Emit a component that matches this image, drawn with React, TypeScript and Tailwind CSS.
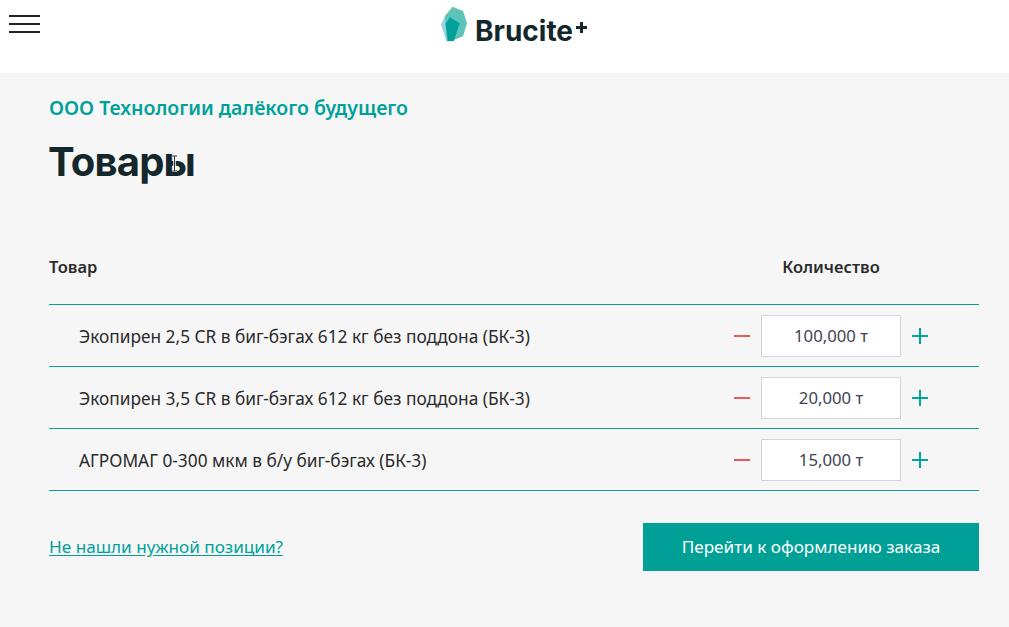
const rows = [
  { id: 1, name: 'Экопирен 2,5 CR в биг-бэгах 612 кг без поддона (БК-3)', qty: '100,000 т' },
  { id: 2, name: 'Экопирен 3,5 CR в биг-бэгах 612 кг без поддона (БК-3)', qty: '20,000 т' },
  { id: 3, name: 'АГРОМАГ 0-300 мкм в б/у биг-бэгах (БК-3)', qty: '15,000 т' },
];

function Logo() {
  return (
    <div className="flex items-start">
      <svg width="28" height="38" viewBox="30 15 85 115">
        <path d="M45 48 L33 75 L50 125 L62 125 L60 52 Z" fill="#9ad4e0" />
        <path d="M45 48 L68 20 L100 33 L112 70 L100 110 L62 125 L50 125 Z" fill="#5fc4b8" />
        <path d="M47 72 L60 52 L90 70 L72 124 L54 124 Z" fill="#00a19a" />
      </svg>
      <span className="ml-[7px] mt-[11px] text-[28px] leading-[30px] font-bold text-[#14282c] font-['Inter',sans-serif]">Brucite</span>
      <svg width="11" height="11" viewBox="0 0 11 11" className="ml-[3px] mt-[17px]">
        <path d="M0 5.5 H11 M5.5 0 V11" stroke="#14282c" strokeWidth="3" />
      </svg>
    </div>
  );
}

export default function App() {
  return (
    <div className="min-h-[627px] bg-[#f6f6f6] font-['Noto_Sans','Open_Sans',sans-serif]">
      <header className="relative h-[73px] bg-white flex justify-center pt-[5px] pl-[18px]">
        <button className="absolute left-[9px] top-[15px] flex w-[31px] flex-col gap-[6px]">
          <span className="h-[2px] bg-[#222222]" />
          <span className="h-[2px] bg-[#222222]" />
          <span className="h-[2px] bg-[#222222]" />
        </button>
        <div className="h-[40px]"><Logo /></div>
      </header>

      <main className="pl-[49px] pr-[30px] pt-[22px]">
        <div className="text-[19.5px] leading-[26px] font-semibold text-[#00a19a]">ООО Технологии далёкого будущего</div>
        <div className="relative mt-[17px] w-fit">
          <h1 className="text-[40px] leading-[48px] font-bold text-[#14282c] font-['Inter',sans-serif] tracking-[-0.8px] ml-[-1px]">Товары</h1>
          <svg width="9" height="17" viewBox="0 0 9 17" className="absolute left-[121px] top-[17px]">
            <path d="M2 1 H7 M4.5 1 V16 M2 16 H7" stroke="#ffffff" strokeWidth="2.5" fill="none" />
            <path d="M2 1 H7 M4.5 1 V16 M2 16 H7" stroke="#333333" strokeWidth="1" fill="none" />
          </svg>
        </div>

        <div className="mt-[44px] flex items-center h-[75px] text-[16.5px] font-semibold text-[#2b2b2b] border-b border-b-[#0f9d94]">
          <div className="flex-1">Товар</div>
          <div className="w-[140px] mr-[78px] text-center">Количество</div>
        </div>

        {rows.map((row) => (
          <div key={row.id} className="flex items-center h-[62px] border-b border-b-[#0f9d94]">
            <div className="flex-1 pl-[30px] pt-[2px] text-[17.3px] text-[#2b2b2b]">{row.name}</div>
            <div className="flex items-center mr-[51px]">
              <svg width="16" height="16" viewBox="0 0 16 16" className="mr-[11px]">
                <path d="M0 8 H16" stroke="#e85a5a" strokeWidth="2" />
              </svg>
              <div className="w-[140px] h-[42px] bg-white border border-[#cfd6de] flex items-center justify-center pt-[1px] text-[16.7px] text-[#3d4450]">
                {row.qty}
              </div>
              <svg width="16" height="16" viewBox="0 0 16 16" className="ml-[11px]">
                <path d="M0 8 H16 M8 0 V16" stroke="#00a5a0" strokeWidth="2" />
              </svg>
            </div>
          </div>
        ))}

        <div className="mt-[32px] flex items-center justify-between">
          <a className="text-[17.15px] text-[#00a19a] underline underline-offset-2">Не нашли нужной позиции?</a>
          <button className="w-[336px] h-[48px] bg-[#00a096] text-white text-[17.15px]">Перейти к оформлению заказа</button>
        </div>
      </main>
    </div>
  );
}
